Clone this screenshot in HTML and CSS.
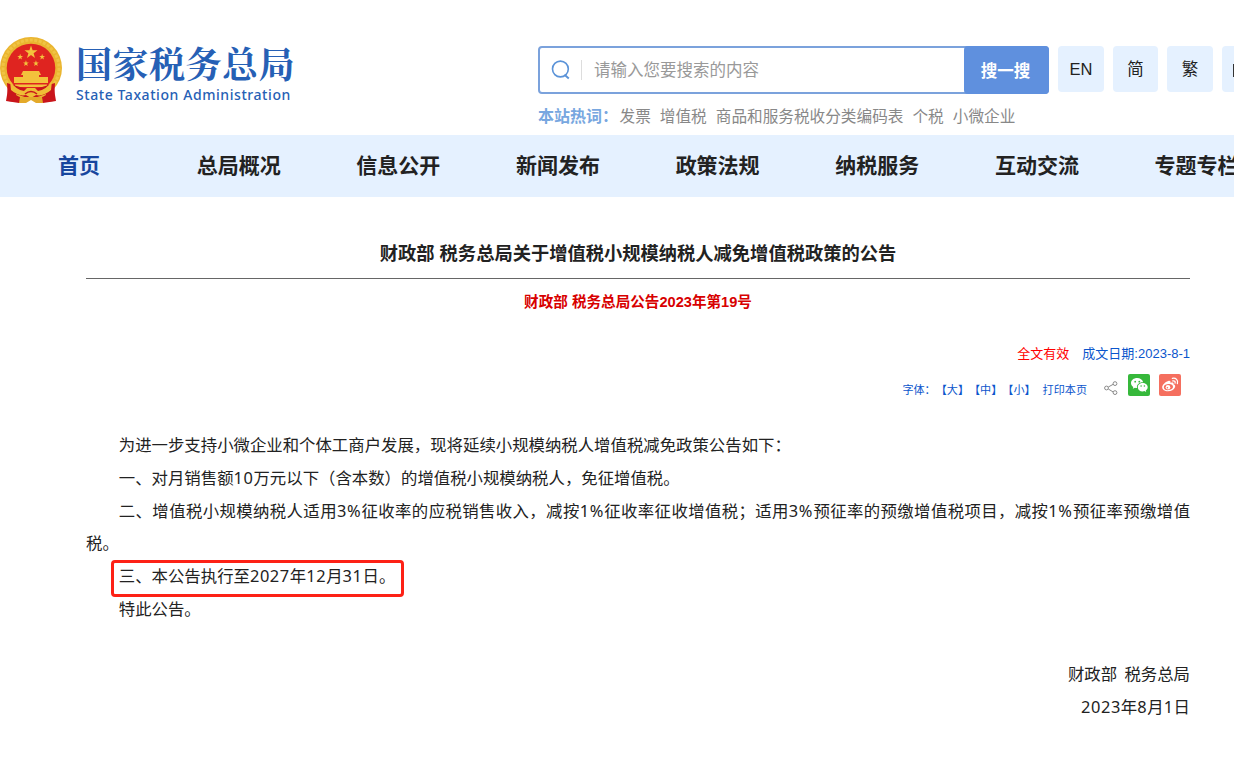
FILE: index.html
```html
<!DOCTYPE html>
<html lang="zh-CN">
<head>
    <meta charset="UTF-8">
    <meta name="viewport" content="width=device-width, initial-scale=1.0">
    <title>国家税务总局</title>
    <link rel="stylesheet" href="styles.css">
</head>
<body>
    <header class="header">
        <div class="logo">
            <svg class="emblem" viewBox="0 0 62 67">
                <path d="M9 46 L6 64 L19 66 L31 61 L43 66 L56 64 L53 46 Z" fill="#c9151b"/>
                <circle cx="31" cy="31" r="31" fill="#eab530"/>
                <circle cx="31" cy="31" r="28" fill="none" stroke="#f0c444" stroke-width="3" stroke-dasharray="3 1.5"/>
                <circle cx="31" cy="31" r="24.3" fill="#df2420"/>
                <g fill="#f3c23c">
                    <path id="star" d="M31 8.5 L32.6 13.2 L37.5 13.2 L33.6 16.2 L35 21 L31 18.1 L27 21 L28.4 16.2 L24.5 13.2 L29.4 13.2 Z"/>
                    <use href="#star" transform="translate(6.2 13) scale(.45)"/>
                    <use href="#star" transform="translate(28.2 13) scale(.45)"/>
                    <use href="#star" transform="translate(12 19.5) scale(.45)"/>
                    <use href="#star" transform="translate(22 19.5) scale(.45)"/>
                    <path d="M23 34 H39 L41 38 H39 V40 H48 V46 H14 V40 H23 V38 H21 Z"/>
                    <path d="M15 47.5 H47 V50 H15 Z"/>
                </g>
                <path d="M7 46 L20 50 Q31 54 42 50 L55 46 L54 64 L45 65 L46 57 Q31 64 16 57 L17 65 L8 64 Z" fill="#c9151b"/>
                <path d="M10 44 Q16 53 24 54 L27 51 H35 L38 54 Q46 53 52 44 L51 53 Q43 60 36 58 L31 61 L26 58 Q19 60 11 53 Z" fill="#efbd36"/>
                <path d="M20 60 L42 60 L43 66 L36 66 L31 63 L26 66 L19 66 Z" fill="#e4aa2a"/>
                <path d="M25 57 Q31 52 37 57" fill="none" stroke="#c9151b" stroke-width="1.5"/>
            </svg>
            <div class="logo-text">
                <div class="logo-cn">国家税务总局</div>
                <div class="logo-en">State Taxation Administration</div>
            </div>
        </div>
        <div class="search">
            <div class="search-row">
                <div class="search-box">
                    <svg class="search-icon" viewBox="0 0 20 20" fill="none" stroke="#5b93d8" stroke-width="1.6">
                        <circle cx="9.4" cy="9" r="7.9"/>
                        <path d="M13.5 14.7 L17.8 18.5" stroke-width="1.9"/>
                    </svg>
                    <span class="placeholder">请输入您要搜索的内容</span>
                    <button class="search-btn">搜一搜</button>
                </div>
                <a class="lang">EN</a>
                <a class="lang">简</a>
                <a class="lang">繁</a>
                <a class="lang lang-more">
                    <svg width="16" height="16" viewBox="0 0 16 16" fill="none" stroke="#333"><path d="M1.5 3.5 H15 V15.5 M1.5 3 V16"/></svg>
                </a>
            </div>
            <div class="hot">
                <b>本站热词：</b><a>发票</a><a>增值税</a><a>商品和服务税收分类编码表</a><a>个税</a><a>小微企业</a>
            </div>
        </div>
    </header>

    <nav class="nav">
        <a class="active">首页</a>
        <a>总局概况</a>
        <a>信息公开</a>
        <a>新闻发布</a>
        <a>政策法规</a>
        <a>纳税服务</a>
        <a>互动交流</a>
        <a>专题专栏</a>
    </nav>

    <main class="article">
        <h1>财政部 税务总局关于增值税小规模纳税人减免增值税政策的公告</h1>
        <h2>财政部 税务总局公告2023年第19号</h2>
        <div class="status">
            <span class="valid">全文有效</span>
            <span>成文日期:2023-8-1</span>
        </div>
        <div class="tools">
            <span class="font-size">字体：</span><a>【大】</a><a>【中】</a><a>【小】</a>
            <a class="print">打印本页</a>
            <svg class="share" viewBox="0 0 14 14" fill="none" stroke="#8a8a8a">
                <path d="M4.3 6 L9.2 3.3 M4.3 8 L9.2 11"/>
                <circle cx="2.5" cy="7" r="1.9"/>
                <circle cx="11" cy="2.6" r="1.9"/>
                <circle cx="11" cy="11.6" r="1.9"/>
            </svg>
            <svg class="social" viewBox="0 0 22 22">
                <rect width="22" height="22" rx="2" fill="#36b83b"/>
                <path d="M9.2 4 C5.7 4 3 6.2 3 9 C3 10.6 3.9 12 5.3 12.9 L4.8 14.8 L7 13.7 Q8 14 9 14 C8.4 10.6 11.2 8 15.2 8.2 C14.6 5.7 12.1 4 9.2 4 Z" fill="#fff"/>
                <path d="M14.7 9 C11.9 9 9.8 10.9 9.8 13.2 C9.8 15.6 11.9 17.4 14.7 17.4 L16.4 17.1 L18.2 18 L17.8 16.4 C19 15.6 19.7 14.5 19.7 13.2 C19.7 10.9 17.5 9 14.7 9 Z" fill="#fff"/>
                <g fill="#36b83b"><circle cx="7.2" cy="7.7" r=".9"/><circle cx="11.3" cy="7.7" r=".9"/><circle cx="13.1" cy="12" r=".8"/><circle cx="16.4" cy="12" r=".8"/></g>
            </svg>
            <svg class="social" viewBox="0 0 22 22">
                <rect width="22" height="22" rx="2" fill="#f56f5f"/>
                <path d="M9.2 7 C10.8 6.3 11.9 6.9 11.4 8.8 C13.5 8 15 8.4 14.5 10.3 C16 10.8 16.6 12 16 13.3 C15 15.8 12.2 17.2 9 17.2 C5.7 17.2 3.2 15.6 3.2 13.2 C3.2 11 6.2 8 9.2 7 Z" fill="#fff"/>
                <ellipse cx="9.4" cy="13.1" rx="4.6" ry="3" fill="#f56f5f" transform="rotate(-6 9.4 13.1)"/>
                <circle cx="9" cy="13.3" r="2.3" fill="#fff"/>
                <circle cx="8.4" cy="13.7" r=".8" fill="#f56f5f"/>
                <path d="M13.4 4.3 C16.8 3.5 19.5 6.2 18.4 9.6 M13.8 6.9 C15.5 6.5 16.5 7.6 16.1 9.1" fill="none" stroke="#fff" stroke-width="1.3" stroke-linecap="round"/>
            </svg>
        </div>
        <div class="content">
            <p>为进一步支持小微企业和个体工商户发展，现将延续小规模纳税人增值税减免政策公告如下：</p>
            <p>一、对月销售额<i>10</i>万元以下（含本数）的增值税小规模纳税人，免征增值税。</p>
            <p>二、增值税小规模纳税人适用<i>3%</i>征收率的应税销售收入，减按<i>1%</i>征收率征收增值税；适用<i>3%</i>预征率的预缴增值税项目，减按<i>1%</i>预征率预缴增值税。</p>
            <p><span class="mark">三、本公告执行至<i>2027</i>年<i>12</i>月<i>31</i>日。</span></p>
            <p>特此公告。</p>
        </div>
        <div class="sign">
            <p>财政部&nbsp; 税务总局</p>
            <p><i>2023</i>年<i>8</i>月<i>1</i>日</p>
        </div>
    </main>
</body>
</html>
```
FILE: styles.css
```css
body {
    margin: 0;
    height: 760px;
    overflow: hidden;
    background: #fff;
    color: #222;
    font-family: "Noto Sans CJK SC", sans-serif;
}
h1, h2, p {
    margin: 0;
}
i {
    font-style: normal;
}

/* Header */
.header {
    display: flex;
    height: 135px;
    box-sizing: border-box;
}
.logo {
    display: flex;
    width: 538px;
    flex-shrink: 0;
    padding-top: 37px;
    box-sizing: border-box;
}
.emblem {
    width: 62px;
    height: 67px;
    margin-right: 14px;
}
.logo-text {
    color: #2660b5;
    white-space: nowrap;
}
.logo-cn {
    font-family: "Noto Serif CJK SC", "Noto Sans CJK SC", serif;
    font-size: 36px;
    font-weight: 700;
    line-height: 54px;
    letter-spacing: 0.5px;
    margin-top: -1px;
}
.logo-en {
    font-family: "Noto Sans", sans-serif;
    font-size: 14px;
    font-weight: 500;
    line-height: 18px;
    letter-spacing: 0.57px;
    margin-top: -4px;
}
.search {
    padding-top: 46px;
    flex-shrink: 0;
}
.search-row {
    display: flex;
}
.search-box {
    display: flex;
    align-items: center;
    width: 511px;
    height: 48px;
    box-sizing: border-box;
    border: 2px solid #7ba2dc;
    border-radius: 4px;
    margin-right: 9px;
}
.search-icon {
    width: 20px;
    height: 20px;
    margin-left: 11px;
}
.placeholder {
    flex: 1;
    margin-left: 10px;
    padding: 0 0 2px 12px;
    border-left: 1px solid #ddd;
    font-size: 16.5px;
    line-height: 18px;
    color: #999;
}
.search-btn {
    width: 85px;
    height: 48px;
    margin-right: -2px;
    padding: 0 2px 1px 0;
    border: none;
    border-radius: 4px;
    background: #5f90de;
    color: #fff;
    font-family: inherit;
    font-size: 16.5px;
    font-weight: 700;
}
.lang {
    width: 45.8px;
    height: 46px;
    margin-right: 8.8px;
    border-radius: 4px;
    background: #e5f1ff;
    font-family: "Liberation Sans", "Noto Sans CJK SC", sans-serif;
    font-size: 16.5px;
    line-height: 46px;
    text-align: center;
}
.lang-more {
    display: flex;
    align-items: center;
    padding-left: 10px;
    box-sizing: border-box;
}
.hot {
    display: flex;
    margin-top: 10px;
    font-size: 15.65px;
    line-height: 24px;
    color: #888;
}
.hot b {
    width: 81.5px;
    font-size: 16px;
    line-height: 23px;
    color: #78a7e0;
}
.hot a {
    margin-right: 9px;
}

/* Navigation */
.nav {
    display: flex;
    height: 62px;
    background: #e5f1ff;
}
.nav a {
    width: 159.65px;
    flex-shrink: 0;
    padding-right: 1.5px;
    box-sizing: border-box;
    font-size: 21px;
    font-weight: 700;
    line-height: 58px;
    text-align: center;
}
.nav .active {
    color: #17469e;
}

/* Article */
.article {
    width: 1104px;
    margin-left: 86px;
}
.article h1 {
    padding: 42px 0 9px;
    border-bottom: 1px solid #666;
    font-family: "Liberation Sans", "Noto Sans CJK SC", sans-serif;
    font-size: 18.27px;
    line-height: 30px;
    text-align: center;
}
.article h2 {
    margin-top: 13px;
    font-family: "Liberation Sans", "Noto Sans CJK SC", sans-serif;
    font-size: 14.6px;
    line-height: 20px;
    text-align: center;
    color: #d80000;
}
.status {
    display: flex;
    justify-content: flex-end;
    gap: 13px;
    margin-top: 32px;
    font-family: "Liberation Sans", "Noto Sans CJK SC", sans-serif;
    font-size: 13px;
    line-height: 20px;
    color: #0b55cc;
}
.valid {
    color: #f00;
}
.tools {
    display: flex;
    justify-content: flex-end;
    height: 28px;
    margin-top: 10px;
    padding-right: 9px;
    font-size: 11.1px;
    line-height: 30px;
    color: #0b55cc;
}
.print {
    margin-left: 7px;
}
.share {
    width: 14px;
    height: 14px;
    margin: 7px 10px 0 17px;
}
.social {
    width: 22px;
    height: 22px;
}
.social + .social {
    margin-left: 9px;
}
.content {
    margin-top: 26px;
}
.content, .sign {
    font-size: 16.4px;
    line-height: 32.8px;
}
.content p {
    text-indent: 2em;
    text-align: justify;
}
.content i, .sign i {
    font-family: "Noto Sans", sans-serif;
    line-height: 1;
    letter-spacing: 0.6px;
}
/* red frame round the highlighted clause */
.mark {
    position: relative;
}
.mark::after {
    content: "";
    position: absolute;
    left: -8px;
    top: -3px;
    width: 287px;
    height: 31px;
    border: 3px solid #fd2116;
    border-radius: 4px;
}
.sign {
    margin-top: 32px;
    text-align: right;
}
```
